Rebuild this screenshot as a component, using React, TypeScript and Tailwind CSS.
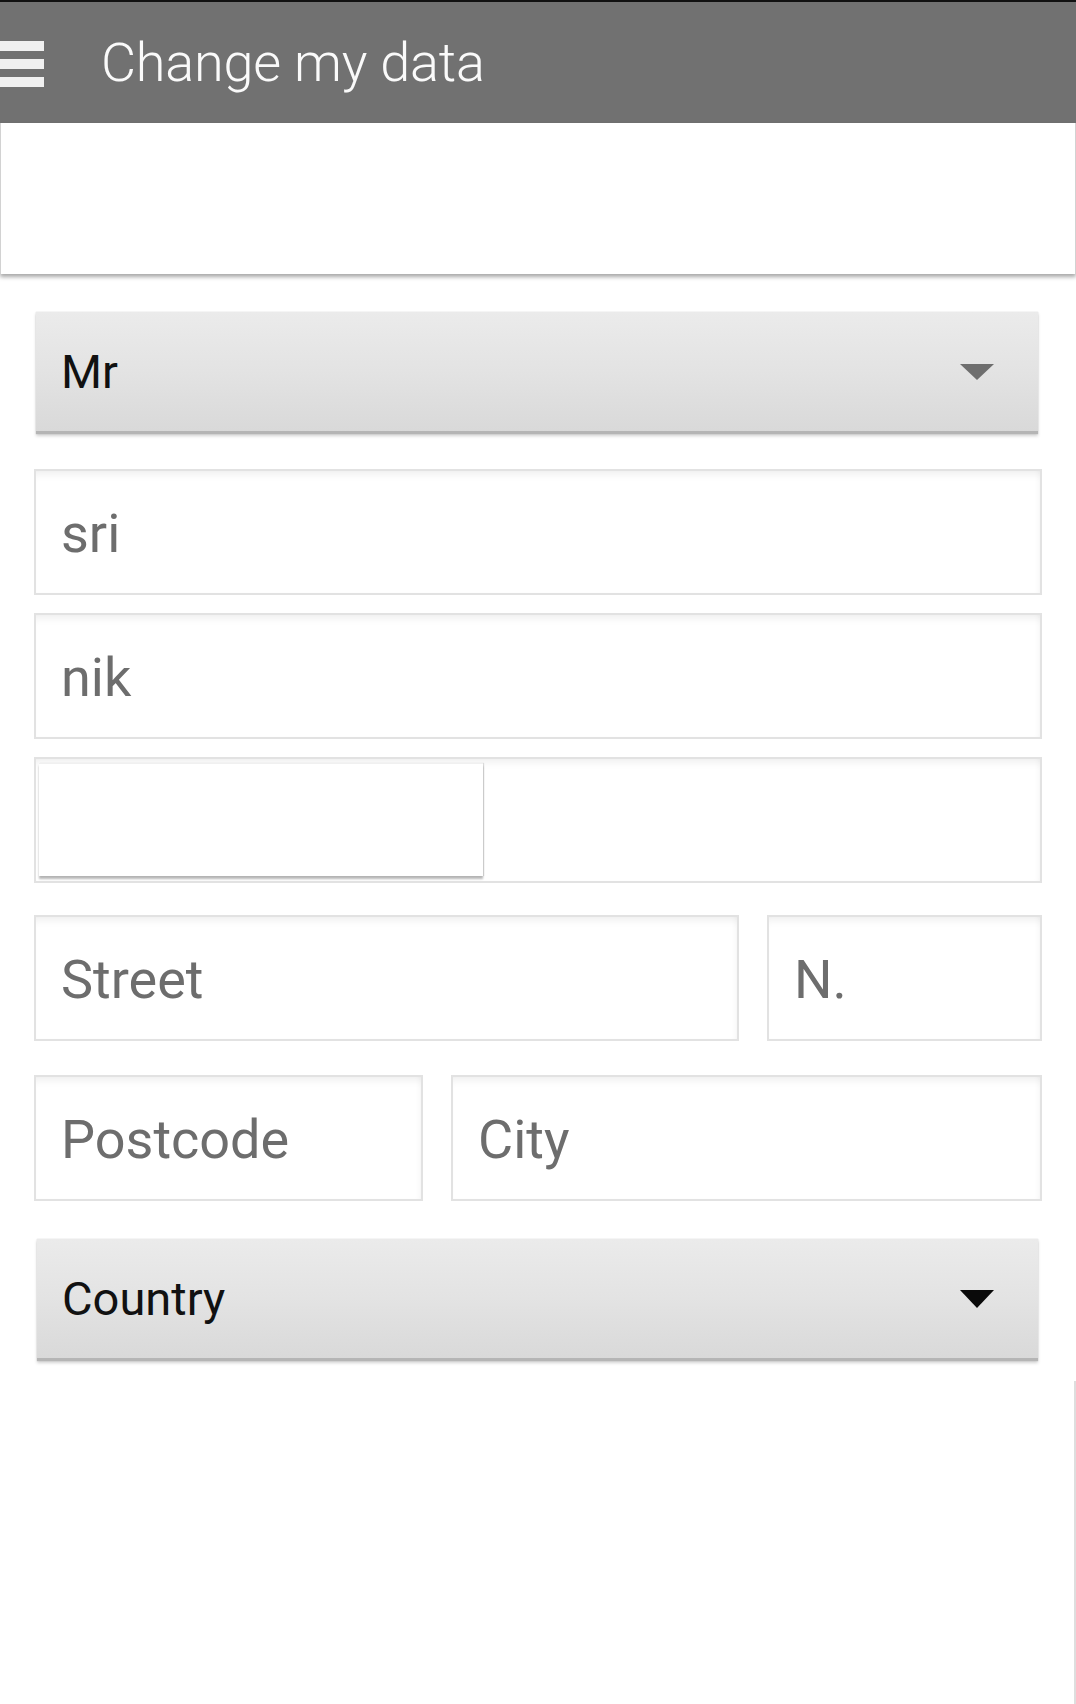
import React from "react";

function Triangle({ color, h }: { color: string; h: number }) {
  return (
    <svg width="34" height={h} viewBox={`0 0 34 ${h}`} className="block">
      <polygon points={`0,0 34,0 17,${h}`} fill={color} />
    </svg>
  );
}

function SelectBox({ label, arrow, arrowH }: { label: string; arrow: string; arrowH: number }) {
  return (
    <div className="h-[122px] ml-[3px] mr-[4px] flex items-center justify-between pl-[25px] pr-[44px] bg-linear-to-b from-[#ebebeb] via-[#e3e3e3] to-[#d9d9d9] border-b-[3px] border-[#b5b5b5] shadow-[0_2px_3px_rgba(0,0,0,0.18),0_0_1px_rgba(0,0,0,0.2)]">
      <span className="text-[47px] leading-none text-[#111111]">{label}</span>
      <Triangle color={arrow} h={arrowH} />
    </div>
  );
}

function Field({
  value,
  placeholder,
  className = "",
}: {
  value?: string;
  placeholder?: string;
  className?: string;
}) {
  return (
    <input
      readOnly
      value={value ?? ""}
      placeholder={placeholder}
      className={`h-[126px] border-2 border-[#e2e2e2] bg-white pl-[25px] pt-[3px] text-[54px] text-[#6d6d6d] placeholder:text-[#6d6d6d] outline-none shadow-[inset_0_9px_8px_-6px_rgba(0,0,0,0.07),inset_-4px_0_6px_-4px_rgba(0,0,0,0.06)] ${className}`}
    />
  );
}

export default function App() {
  return (
    <div className="relative w-[1076px] h-[1704px] bg-white overflow-hidden flex flex-col font-['Roboto',sans-serif]">
      <header className="h-[123px] shrink-0 bg-[#717171] border-t-2 border-[#111111] flex items-center">
        <div className="w-[44px] flex flex-col gap-[8px] mt-[3px]">
          <div className="h-[10px] bg-[#f0f0f0]" />
          <div className="h-[10px] bg-[#f0f0f0]" />
          <div className="h-[10px] bg-[#f0f0f0]" />
        </div>
        <h1 className="ml-[57px] text-[54px] leading-none font-light text-[#fafafa] tracking-[-0.2px]">Change my data</h1>
      </header>

      <div className="h-[151px] shrink-0 bg-white border-x border-[#d2d2d2] shadow-[0_3px_4px_rgba(0,0,0,0.34)] relative z-10" />

      <main className="px-[34px] pt-[38px] flex flex-col">
        <div className="ml-[-1px]">
          <SelectBox label="Mr" arrow="#6e6e6e" arrowH={16} />
        </div>

        <Field value="sri" className="mt-[35px] w-full" />
        <Field value="nik" className="mt-[18px] w-full" />

        <div className="mt-[18px] h-[126px] border-2 border-[#e2e2e2] bg-white shadow-[inset_0_9px_8px_-6px_rgba(0,0,0,0.07),inset_-4px_0_6px_-4px_rgba(0,0,0,0.06)] pl-[3px] pt-[4px]">
          <div className="w-[444px] h-[113px] bg-white border-t border-[#f0f0f0] shadow-[0_3px_2px_rgba(0,0,0,0.28),1px_0_1px_rgba(0,0,0,0.12)]" />
        </div>

        <div className="mt-[32px] flex gap-[28px]">
          <Field placeholder="Street" className="w-[705px]" />
          <Field placeholder="N." className="flex-1 min-w-0" />
        </div>

        <div className="mt-[34px] flex gap-[28px]">
          <Field placeholder="Postcode" className="w-[389px]" />
          <Field placeholder="City" className="flex-1 min-w-0" />
        </div>

        <div className="mt-[38px]">
          <SelectBox label="Country" arrow="#0a0a0a" arrowH={18} />
        </div>
      </main>

      <div className="flex-1 mt-[20px] border-r-2 border-[#dedede]" />
    </div>
  );
}
